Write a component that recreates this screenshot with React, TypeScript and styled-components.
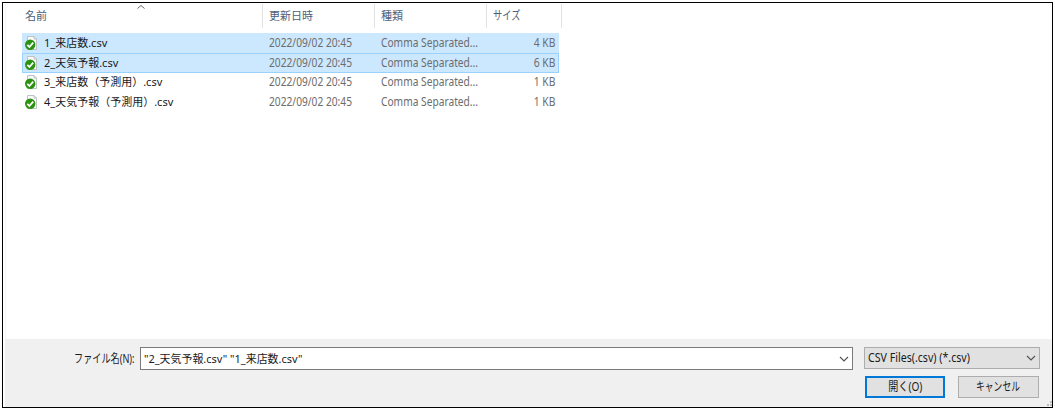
import React from "react";
import styled, { createGlobalStyle } from "styled-components";

const GlobalStyle = createGlobalStyle`
  * { box-sizing: border-box; }
  body {
    margin: 0;
    background: #fff;
    font-family: "Noto Sans", "Noto Sans CJK JP", sans-serif;
    font-size: 11px;
    color: #1a1a1a;
  }
`;

const Page = styled.div`
  width: 1055px;
  height: 410px;
  padding: 2px;
`;

const Dialog = styled.main`
  width: 1051px;
  height: 406px;
  border: 1px solid #000;
  display: flex;
  flex-direction: column;
  padding: 1px 0 0 2px;
`;

const FileList = styled.section`
  height: 335px;
  padding-left: 17px;
  box-shadow: inset 1px 0 #f4f4f4;
`;

const Columns = styled.header`
  display: grid;
  grid-template-columns: 241px 112px 112px 75px;
  height: 24px;
  margin-bottom: 5px;
  color: #4c607a;
  position: relative;
`;

const ColumnTitle = styled.div`
  padding: 0 0 1px 3px;
  border-right: 1px solid #e2e2e2;
  display: flex;
  align-items: center;

  & + & { padding-left: 6px; }
`;

const SortMark = styled.svg`
  position: absolute;
  left: 114px;
  top: 0;
`;

const Row = styled.div<{ $selected?: boolean; $focused?: boolean }>`
  display: grid;
  grid-template-columns: 21px 225px 112px 112px 1fr;
  align-items: center;
  width: 537px;
  height: 20px;
  margin-bottom: -0.3px;
  background: ${(p) => (p.$selected ? "#cce8ff" : "transparent")};
  border: 1px solid ${(p) => (p.$focused ? "#99d1ff" : "transparent")};
`;

const Text = styled.span<{ $size?: number; $stretch?: number; $origin?: string }>`
  display: inline-block;
  white-space: pre;
  font-size: ${(p) => p.$size ?? 11}px;
  line-height: 16px;
  transform: scaleX(${(p) => p.$stretch ?? 1});
  transform-origin: ${(p) => p.$origin ?? "left"} center;
`;

const Detail = styled(Text)`
  color: #6d6d6d;
  font-size: 12px;
`;

const Size = styled(Detail)`
  text-align: right;
  padding-right: 3px;
`;

const Footer = styled.footer`
  flex: 1;
  background: #f0f0f0;
  padding: 8px 12px 0 0;
  position: relative;
`;

const FieldRow = styled.div`
  display: flex;
  align-items: flex-start;
`;

const FieldLabel = styled.label`
  flex: 1;
  height: 23px;
  padding-right: 5px;
  display: flex;
  align-items: center;
  justify-content: flex-end;
`;

const NameBox = styled.div`
  width: 713px;
  height: 23px;
  border: 1px solid #7a7a7a;
  background: #fff;
  padding: 0 3px;
  display: flex;
  align-items: center;
  justify-content: space-between;
`;

const TypeSelect = styled.div`
  width: 176px;
  height: 22px;
  margin-left: 11px;
  border: 1px solid #adadad;
  background: #e1e1e1;
  padding: 0 3px;
  display: flex;
  align-items: center;
  justify-content: space-between;
`;

const Actions = styled.div`
  display: flex;
  justify-content: flex-end;
  gap: 13px;
  padding-right: 1px;
  margin-top: 6px;
`;

const Button = styled.button<{ $primary?: boolean }>`
  width: ${(p) => (p.$primary ? 80 : 81)}px;
  height: 22px;
  padding: 0;
  font: inherit;
  color: inherit;
  background: #e1e1e1;
  border: ${(p) => (p.$primary ? "2px solid #0078d7" : "1px solid #adadad")};
  display: flex;
  align-items: center;
  justify-content: center;
`;

const Grip = styled.svg`
  position: absolute;
  right: 0;
  bottom: 0;
`;

const Chevron = () => (
  <svg width="10" height="8" viewBox="0 0 10 8">
    <path d="M1 2l4 4 4-4" fill="none" stroke="#505050" strokeWidth="1.1" />
  </svg>
);

const FileIcon = () => (
  <svg width="16" height="16" viewBox="0 0 16 16">
    <path d="M4.5 1.5h6.5l2.5 2.5v10.5h-9z" fill="#fafafa" stroke="#b9bcbe" strokeWidth="0.9" />
    <path d="M11 1.5v2.5h2.5" fill="none" stroke="#b4b8ba" strokeWidth="0.8" />
    <circle cx="7.2" cy="9.7" r="5.2" fill="#2c9212" />
    <path d="M4.3 9.8l2.1 2.2 3.8-4.4" fill="none" stroke="#fff" strokeWidth="1.8" />
  </svg>
);

const files = [
  { name: "1_来店数.csv", size: "4 KB", selected: true },
  { name: "2_天気予報.csv", size: "6 KB", selected: true, focused: true },
  { name: "3_来店数（予測用）.csv", size: "1 KB" },
  { name: "4_天気予報（予測用）.csv", size: "1 KB" },
];

export default function App() {
  return (
    <Page>
      <GlobalStyle />
      <Dialog>
        <FileList>
          <Columns>
            <ColumnTitle><Text>名前</Text></ColumnTitle>
            <ColumnTitle><Text>更新日時</Text></ColumnTitle>
            <ColumnTitle><Text>種類</Text></ColumnTitle>
            <ColumnTitle><Text $size={12} $stretch={0.77}>サイズ</Text></ColumnTitle>
            <SortMark width="10" height="6" viewBox="0 0 10 6">
              <path d="M1.5 4.5l3.5-3 3.5 3" fill="none" stroke="#6b6b6b" />
            </SortMark>
          </Columns>
          {files.map((f) => (
            <Row key={f.name} $selected={f.selected} $focused={f.focused}>
              <FileIcon />
              <Text>{f.name}</Text>
              <Detail $stretch={0.85}>2022/09/02 20:45</Detail>
              <Detail $stretch={0.85}>Comma Separated...</Detail>
              <Size $stretch={0.86} $origin="right">{f.size}</Size>
            </Row>
          ))}
        </FileList>
        <Footer>
          <FieldRow>
            <FieldLabel>
              <Text $size={12} $stretch={0.76} $origin="right">ファイル名(N):</Text>
            </FieldLabel>
            <NameBox>
              <Text $stretch={0.995}>"2_天気予報.csv" "1_来店数.csv"</Text>
              <Chevron />
            </NameBox>
            <TypeSelect>
              <Text $size={12} $stretch={0.885}>CSV Files(.csv) (*.csv)</Text>
              <Chevron />
            </TypeSelect>
          </FieldRow>
          <Actions>
            <Button $primary><Text $size={12} $stretch={0.84} $origin="center">開く(O)</Text></Button>
            <Button><Text $size={12} $stretch={0.73} $origin="center">キャンセル</Text></Button>
          </Actions>
          <Grip width="6" height="6" viewBox="0 0 6 6" fill="#bdbdbd">
            <path d="M4 0h2v2h-2zM4 3h2v2h-2zM1 3h2v2h-2z" />
          </Grip>
        </Footer>
      </Dialog>
    </Page>
  );
}
